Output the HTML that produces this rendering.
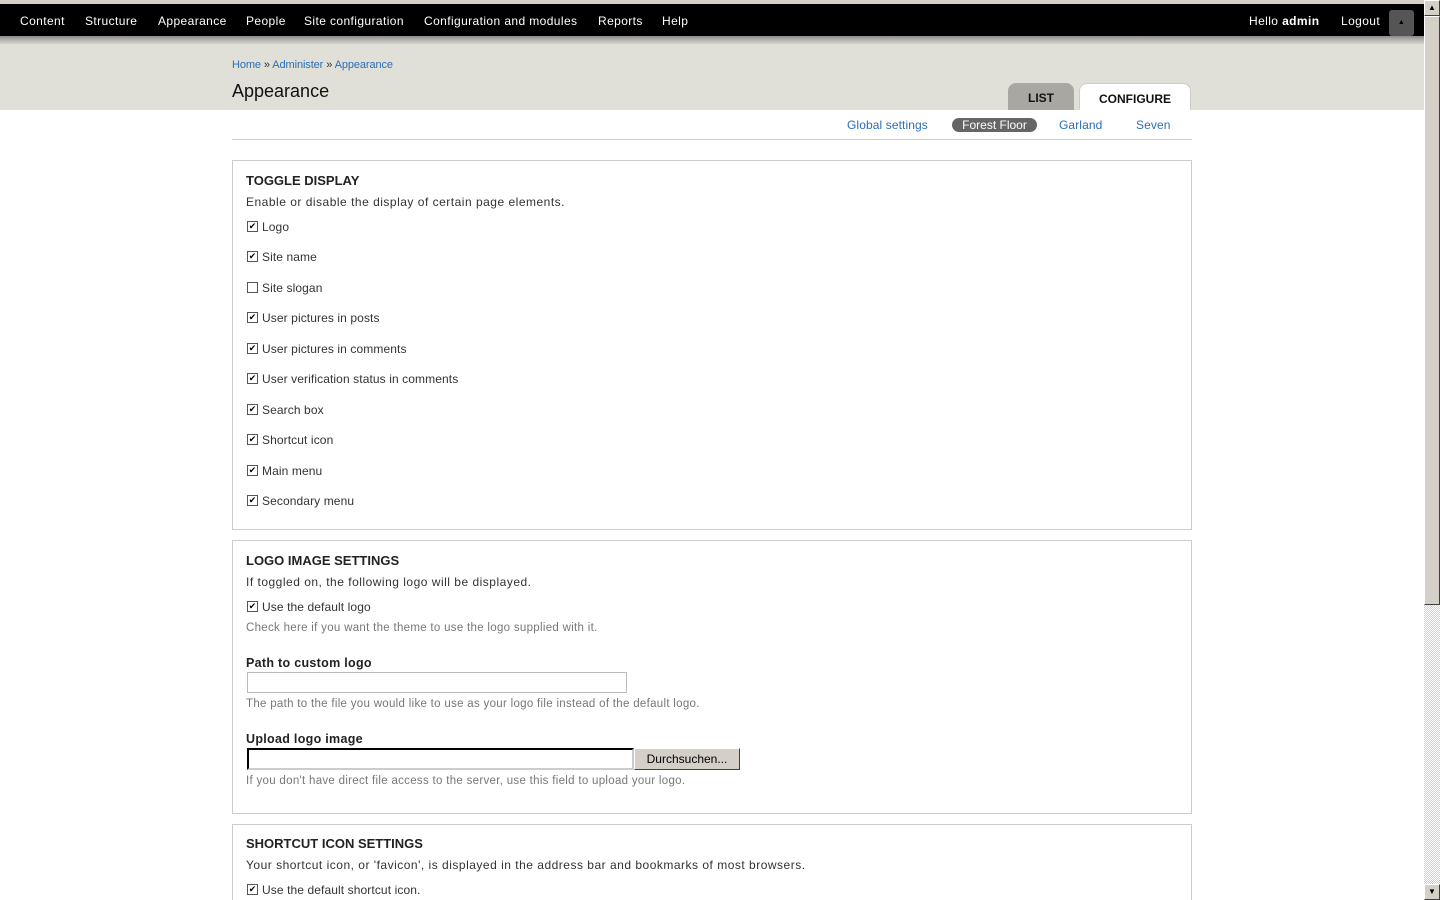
<!DOCTYPE html>
<html><head><meta charset="utf-8"><style>
*{box-sizing:border-box;margin:0;padding:0}
html,body{width:1440px;height:900px;overflow:hidden}
body{background:#fff;font-family:"Liberation Sans",sans-serif;position:relative;color:#333}
.top0{position:absolute;left:0;top:0;width:1424px;height:4px;background:#d4d0c8}
.bar{position:absolute;left:0;top:4px;width:1424px;height:32px;background:#000;color:#fff;font-size:12px;letter-spacing:.4px}
.bar span{position:absolute;top:10px}
.strip{position:absolute;left:0;top:36px;width:1424px;height:8px;background:linear-gradient(#8a8a88,#b5b4ae 50%,#d6d5ce)}
.head{position:absolute;left:0;top:44px;width:1424px;height:66px;background:#e0dfd8}
.bc{position:absolute;left:232px;top:59px;font-size:11px;color:#2a6fb6;letter-spacing:-.1px}
.bc i{font-style:normal;color:#333}
h1{position:absolute;left:232px;top:81px;font-size:18px;font-weight:normal;color:#111}
.tab{position:absolute;top:83px;height:27px;border-radius:8px 8px 0 0;font-size:12px;font-weight:bold;text-align:center;line-height:31px;color:#111}
.sub{position:absolute;top:118px;font-size:12px;color:#2a6fb6;letter-spacing:.1px}
.hr{position:absolute;left:232px;top:139px;width:960px;height:1px;background:#ccc}
.fs{position:absolute;left:232px;width:960px;border:1px solid #ccc}
.t{position:absolute;left:246px;font-size:13px;font-weight:bold;color:#222}
.d{position:absolute;left:246px;font-size:12px;color:#333;letter-spacing:.5px}
.g{position:absolute;left:246px;font-size:11.5px;color:#777;letter-spacing:.3px}
.cb{position:absolute;left:247px;font-size:12px;color:#333;padding-left:15px;letter-spacing:.1px;line-height:14px}
.cb:before{content:"";position:absolute;left:0;top:1px;width:11px;height:11px;border:1px solid #555;background:#fff;box-sizing:border-box}
.cb.on:before{content:"✔";font-size:9px;line-height:9px;text-align:center;color:#000;letter-spacing:0}
.lab{position:absolute;left:246px;font-size:12.5px;font-weight:bold;color:#222;letter-spacing:.3px}
.sb{position:absolute;left:1424px;top:0;width:16px;height:900px;background:repeating-conic-gradient(#d4d0c8 0 25%,#fff 0 50%) 0 0/2px 2px}
.sbtn{position:absolute;left:1424px;width:16px;height:16px;background:#d4d0c8;border:1px solid #fff;border-right-color:#404040;border-bottom-color:#404040;font-size:8px;text-align:center;line-height:14px;color:#000}
.thumb{position:absolute;left:1424px;top:16px;width:16px;height:589px;background:#d4d0c8;border:1px solid #fff;border-right-color:#404040;border-bottom-color:#404040}
</style></head><body>
<div class="top0"></div>
<div class="bar">
<span style="left:20px">Content</span><span style="left:85px">Structure</span><span style="left:158px">Appearance</span><span style="left:246px">People</span><span style="left:304px">Site configuration</span><span style="left:424px">Configuration and modules</span><span style="left:598px">Reports</span><span style="left:662px">Help</span>
<span style="left:1249px">Hello <b>admin</b></span><span style="left:1341px">Logout</span>
<div style="position:absolute;left:1389px;top:6px;width:25px;height:26px;background:#555;border-radius:3px;color:#000;font-size:7px;text-align:center;line-height:26px">▲</div>
</div>
<div class="strip"></div>
<div class="head"></div>
<div class="bc">Home <i>»</i> Administer <i>»</i> Appearance</div>
<h1>Appearance</h1>
<div class="tab" style="left:1008px;width:66px;background:#a8a7a1">LIST</div>
<div class="tab" style="left:1079px;width:112px;background:#fff;border:1px solid #ccc;border-bottom:none">CONFIGURE</div>
<div class="sub" style="left:847px">Global settings</div>
<div class="sub" style="left:952px;top:118px;width:85px;height:14px;background:#666;border-radius:7px;color:#fff;text-align:center;line-height:14px;letter-spacing:0">Forest Floor</div>
<div class="sub" style="left:1059px">Garland</div>
<div class="sub" style="left:1136px">Seven</div>
<div class="hr"></div>

<div class="fs" style="top:160px;height:370px"></div>
<div class="t" style="top:173px">TOGGLE DISPLAY</div>
<div class="d" style="top:195px">Enable or disable the display of certain page elements.</div>
<div class="cb on" style="top:220px">Logo</div>
<div class="cb on" style="top:250px">Site name</div>
<div class="cb" style="top:281px">Site slogan</div>
<div class="cb on" style="top:311px">User pictures in posts</div>
<div class="cb on" style="top:342px">User pictures in comments</div>
<div class="cb on" style="top:372px">User verification status in comments</div>
<div class="cb on" style="top:403px">Search box</div>
<div class="cb on" style="top:433px">Shortcut icon</div>
<div class="cb on" style="top:464px">Main menu</div>
<div class="cb on" style="top:494px">Secondary menu</div>

<div class="fs" style="top:540px;height:274px"></div>
<div class="t" style="top:553px">LOGO IMAGE SETTINGS</div>
<div class="d" style="top:575px">If toggled on, the following logo will be displayed.</div>
<div class="cb on" style="top:600px">Use the default logo</div>
<div class="g" style="top:622px">Check here if you want the theme to use the logo supplied with it.</div>
<div class="lab" style="top:656px">Path to custom logo</div>
<div style="position:absolute;left:247px;top:672px;width:380px;height:21px;border:1px solid #bbb"></div>
<div class="g" style="top:698px">The path to the file you would like to use as your logo file instead of the default logo.</div>
<div class="lab" style="top:732px">Upload logo image</div>
<div style="position:absolute;left:247px;top:748px;width:387px;height:22px;border:2px solid #000;border-right-color:#ccc;border-bottom-color:#ccc"></div>
<div style="position:absolute;left:634px;top:748px;width:106px;height:22px;background:#d4d0c8;border:1px solid #fff;border-right-color:#404040;border-bottom-color:#404040;font-size:12px;color:#000;text-align:center;line-height:20px">Durchsuchen...</div>
<div class="g" style="top:775px">If you don't have direct file access to the server, use this field to upload your logo.</div>

<div class="fs" style="top:824px;height:90px"></div>
<div class="t" style="top:836px">SHORTCUT ICON SETTINGS</div>
<div class="d" style="top:858px">Your shortcut icon, or 'favicon', is displayed in the address bar and bookmarks of most browsers.</div>
<div class="cb on" style="top:883px">Use the default shortcut icon.</div>

<div class="sb"></div>
<div class="thumb"></div>
<div class="sbtn" style="top:0">▲</div>
<div class="sbtn" style="top:884px">▼</div>
</body></html>
